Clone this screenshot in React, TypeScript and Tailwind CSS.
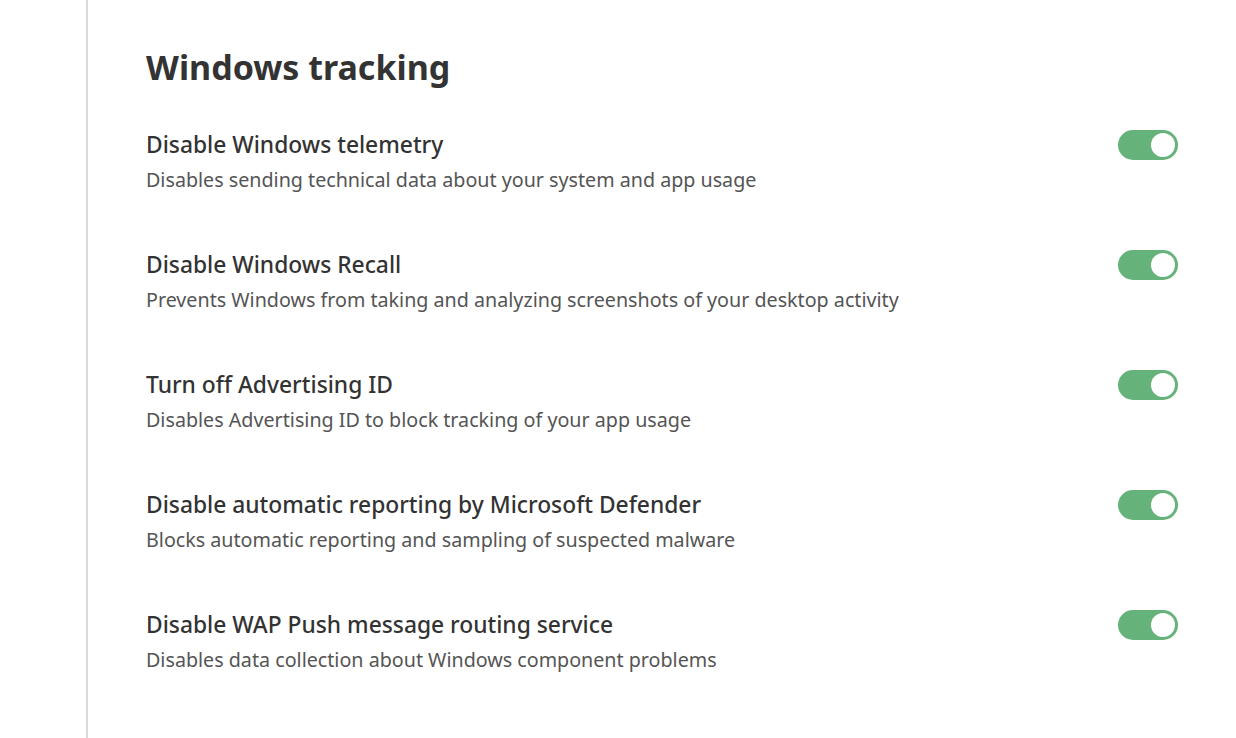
import React, { useState } from "react";

type Setting = {
  title: string;
  description: string;
};

const settings: Setting[] = [
  {
    title: "Disable Windows telemetry",
    description: "Disables sending technical data about your system and app usage",
  },
  {
    title: "Disable Windows Recall",
    description:
      "Prevents Windows from taking and analyzing screenshots of your desktop activity",
  },
  {
    title: "Turn off Advertising ID",
    description: "Disables Advertising ID to block tracking of your app usage",
  },
  {
    title: "Disable automatic reporting by Microsoft Defender",
    description: "Blocks automatic reporting and sampling of suspected malware",
  },
  {
    title: "Disable WAP Push message routing service",
    description: "Disables data collection about Windows component problems",
  },
];

const Toggle = ({ on, onChange }: { on: boolean; onChange: () => void }) => (
  <button
    type="button"
    onClick={onChange}
    className={`relative h-[30px] w-[60px] shrink-0 rounded-full transition-colors ${
      on ? "bg-[#65b37b]" : "bg-[#c8c8c8]"
    }`}
  >
    <span
      className={`absolute top-[3px] h-[24px] w-[24px] rounded-full bg-white transition-all ${
        on ? "left-[33px]" : "left-[3px]"
      }`}
    />
  </button>
);

const App = () => {
  const [values, setValues] = useState<boolean[]>(settings.map(() => true));

  const toggle = (index: number) => {
    setValues((prev) => prev.map((v, i) => (i === index ? !v : v)));
  };

  return (
    <div
      className="flex min-h-[738px] w-full bg-white text-[#333]"
      style={{ fontFamily: '"Noto Sans", "Open Sans", sans-serif' }}
    >
      <aside className="w-[88px] shrink-0 border-r-2 border-[#dadada]" />
      <main className="flex-1 pl-[58px] pr-[58px] pt-[44px]">
        <h1 className="text-[34px] font-bold leading-[46px] text-[#333]">
          Windows tracking
        </h1>
        <div className="mt-[40px] flex flex-col">
          {settings.map((item, index) => (
            <div key={item.title} className="flex h-[120px] items-start justify-between">
              <div className="flex flex-col">
                <span className="text-[22.8px] font-medium leading-[30px] text-[#333]">
                  {item.title}
                </span>
                <span className="mt-[6px] text-[19.7px] leading-[28px] text-[#555]">
                  {item.description}
                </span>
              </div>
              <Toggle on={values[index]} onChange={() => toggle(index)} />
            </div>
          ))}
        </div>
      </main>
    </div>
  );
};

export default App;
